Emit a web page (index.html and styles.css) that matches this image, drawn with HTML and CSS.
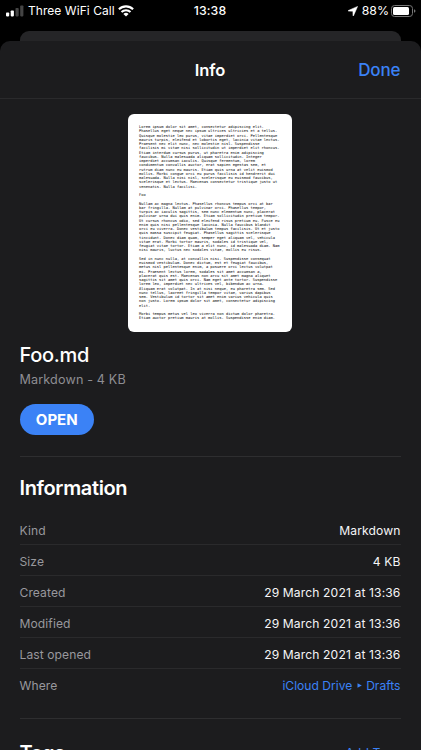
FILE: index.html
```html
<!DOCTYPE html>
<html lang="en">
<head>
<meta charset="utf-8">
<title>Info</title>
<link rel="stylesheet" href="styles.css">
</head>
<body>
<div class="status">
  <div class="status-left">
    <svg class="signal" width="18" height="12" viewBox="0 0 18 12"><rect x="0" y="7.4" width="3.2" height="4" rx=".8" fill="#fff"/><rect x="4.7" y="5.4" width="3.2" height="6" rx=".8" fill="#fff"/><rect x="9.5" y="3" width="3.2" height="8.4" rx=".8" fill="#444"/><rect x="14.2" y=".4" width="3.2" height="11" rx=".8" fill="#444"/></svg>
    <span class="carrier">Three WiFi Call</span>
    <svg class="wifi" width="16" height="12" viewBox="0 0 16 12" fill="none" stroke="#fff" stroke-width="2.1"><path d="M.9 4.3a10.2 10.2 0 0 1 14.200 0M3.500 7a6.500 6.500 0 0 1 9 0"/><path d="M8 11.600L5.400 9a3.700 3.700 0 0 1 5.200 0z" fill="#fff" stroke="none"/></svg>
  </div>
  <time class="clock">13:38</time>
  <div class="status-right">
    <svg class="location" width="10" height="10" viewBox="0 0 10 10"><path d="M9.600.4L.3 4.500q-.5.500.1.600l4.500.1.100 4.500q.1.600.500.100z" fill="#fff" stroke="#fff" stroke-width=".5"/></svg>
    <span class="percent">88%</span>
    <svg class="battery" width="25" height="12" viewBox="0 0 25 12"><rect x=".5" y=".5" width="21" height="11" rx="3" fill="none" stroke="#777"/><rect x="2" y="2" width="16" height="8" rx="1.500" fill="#fff"/><path d="M23 4.200q1.500.6 1.500 1.800T23 7.800z" fill="#777"/></svg>
  </div>
</div>
<div class="back-card"></div>
<main class="sheet">
  <header class="bar">
    <h1 class="title">Info</h1>
    <a class="done">Done</a>
  </header>
  <div class="body">
    <pre class="page">Lorem ipsum dolor sit amet, consectetur adipiscing elit.
Phasellus eget neque nec ipsum ultrices ultricies et a tellus.
Quisque molestie leo purus, vitae imperdiet orci. Pellentesque
mauris turpis, eleifend et lobortis eget, lacinia vitae lectus.
Praesent nec elit nunc, nec molestie nisl. Suspendisse
facilisis mi vitae nisi sollicitudin ut imperdiet elit rhoncus.
Etiam interdum cursus purus, ut pharetra enim adipiscing
faucibus. Nulla malesuada aliquam sollicitudin. Integer
imperdiet accumsan iaculis. Quisque fermentum, lorem
condimentum convallis auctor, erat sapien egestas sem, et
rutrum diam nunc eu mauris. Etiam quis urna at velit euismod
mollis. Morbi congue orci eu purus facilisis id hendrerit dui
malesuada. Nulla nisi nisl, scelerisque eu euismod faucibus,
scelerisque et lectus. Maecenas consectetur tristique justo ut
venenatis. Nulla facilisi.

Foo

Nullam ac magna lectus. Phasellus rhoncus tempus orci at bar
bar fringilla. Nullam at pulvinar orci. Phasellus tempor,
turpis ac iaculis sagittis, sem nunc elementum nunc, placerat
pulvinar urna dui quis enim. Etiam sollicitudin pretium tempor.
Ut cursus rhoncus odio, sed eleifend risus pretium eu. Fusce eu
enim quis nisi pellentesque lacinia. Nulla faucibus blandit
orci eu viverra. Donec vestibulum tempus facilisis. Ut et justo
quis massa suscipit feugiat. Phasellus sagittis scelerisque
tincidunt. Donec diam quam, semper eget aliquam vel, vehicula
vitae erat. Morbi tortor mauris, sodales id tristique vel,
feugiat vitae tortor. Etiam a elit nunc, id malesuada diam. Nam
nisi mauris, luctus nec sodales vitae, mollis eu risus.

Sed in nunc nulla, at convallis nisi. Suspendisse consequat
euismod vestibulum. Donec dictum, est et feugiat faucibus,
metus nisl pellentesque enim, a posuere orci lectus volutpat
mi. Praesent lectus lorem, sodales sit amet accumsan a,
placerat quis est. Maecenas non arcu sit amet magna aliquet
sagittis sit amet quis orci. Nam eget ante tortor. Suspendisse
lorem leo, imperdiet nec ultrices vel, bibendum ac urna.
Aliquam erat volutpat. In at nisi neque, eu pharetra sem. Sed
nunc tellus, laoreet fringilla tempor vitae, varius dapibus
sem. Vestibulum id tortor sit amet enim varius vehicula quis
non justo. Lorem ipsum dolor sit amet, consectetur adipiscing
elit.

Morbi tempus metus vel leo viverra non dictum dolor pharetra.
Etiam auctor pretium mauris at mollis. Suspendisse enim diam.</pre>
    <h2 class="name">Foo.md</h2>
    <p class="meta">Markdown - 4 KB</p>
    <button class="open">OPEN</button>
    <section class="info">
      <h2 class="heading">Information</h2>
      <dl class="rows">
        <div class="row"><dt>Kind</dt><dd>Markdown</dd></div>
        <div class="row"><dt>Size</dt><dd>4 KB</dd></div>
        <div class="row"><dt>Created</dt><dd>29 March 2021 at 13:36</dd></div>
        <div class="row"><dt>Modified</dt><dd>29 March 2021 at 13:36</dd></div>
        <div class="row"><dt>Last opened</dt><dd>29 March 2021 at 13:36</dd></div>
        <div class="row"><dt>Where</dt><dd class="link">iCloud Drive <svg width="5" height="5" viewBox="0 0 5 5"><path d="M.5.300L4.800 2.500.5 4.700z" fill="#3b82f6"/></svg> Drafts</dd></div>
      </dl>
    </section>
    <section class="tags">
      <h2 class="heading">Tags</h2>
      <a class="add">Add Tags</a>
    </section>
  </div>
</main>
</body>
</html>
```
FILE: styles.css
```css
* { box-sizing: border-box; margin: 0; padding: 0; }
body {
  width: 421px;
  height: 750px;
  overflow: hidden;
  background: #000;
  color: #fff;
  font-family: Inter, "Liberation Sans", sans-serif;
  display: flex;
  flex-direction: column;
}
.status {
  height: 31px;
  flex: none;
  display: grid;
  grid-template-columns: 1fr auto 1fr;
  font-size: 12.5px;
  line-height: 21px;
  padding: 0 5px 0 6px;
}
.status-left, .status-right { display: flex; height: 21px; align-items: center; }
.status-right { justify-content: flex-end; }
.carrier { margin-left: 4px; font-size: 12px; letter-spacing: 0.05px; white-space: nowrap; }
.wifi { margin-left: 3px; }
.clock { font-weight: 500; font-size: 12.3px; letter-spacing: 0.1px; margin-left: -2px; }
.percent { margin: 0 2px 0 4px; font-size: 12.3px; }
.back-card {
  flex: none;
  height: 10px;
  margin: 0 20px;
  border-radius: 9px 9px 0 0;
  background: #252527;
}
.sheet {
  flex: none;
  height: 709px;
  overflow: hidden;
  border-radius: 10px 10px 0 0;
  background: #1c1c1e;
}
.bar {
  height: 58px;
  display: grid;
  grid-template-columns: 1fr auto 1fr;
  align-items: center;
  padding: 0 20.5px 0 19.5px;
  border-bottom: 1px solid #2a2a2c;
}
.title { grid-column: 2; font-size: 16.5px; font-weight: 600; }
.done { justify-self: end; font-size: 17px; font-weight: 500; color: #3b82f6; letter-spacing: -0.1px; }
.body { padding: 15px 20.5px 0 19.5px; display: flex; flex-direction: column; }
.page {
  align-self: center;
  width: 164px;
  height: 218px;
  padding: 11px 0 0 11px;
  border-radius: 6px;
  background: #fff;
  color: #000;
  font-family: "DejaVu Sans Mono", monospace;
  font-size: 3.71px;
  line-height: 4.245px;
  overflow: hidden;
}
.name { margin-top: 11px; font-size: 20px; line-height: 24px; font-weight: 500; letter-spacing: -0.3px; }
.meta { margin-top: 4px; font-size: 12.6px; line-height: 18px; color: #8e8e93; letter-spacing: 0.15px; }
.open {
  margin-top: 14.5px;
  width: 74.5px;
  height: 31.5px;
  border: 0;
  border-radius: 16px;
  background: #3b82f6;
  color: #fff;
  font: 700 15px/31px Inter, "Liberation Sans", sans-serif;
}
.info { margin-top: 21px; border-top: 1px solid #2e2e30; padding-top: 18px; }
.heading { font-size: 20px; line-height: 26px; font-weight: 600; letter-spacing: -0.35px; }
.rows { margin-top: 13px; }
.row {
  height: 31px;
  display: flex;
  justify-content: space-between;
  align-items: center;
  padding-top: 2px;
  border-bottom: 1px solid #2a2a2c;
  font-size: 12.1px;
  letter-spacing: 0.13px;
}
.row:last-child { border-bottom-color: transparent; }
dt { color: #98989d; letter-spacing: 0.08px; }
dd { color: #f5f5f7; }
dd.link { color: #3b82f6; letter-spacing: 0; }
dd svg { vertical-align: 2px; margin: 0 1px; }
.tags {
  margin-top: 18px;
  border-top: 1px solid #2e2e30;
  padding-top: 21px;
  display: flex;
  justify-content: space-between;
}
.add { color: #3b82f6; font-size: 12.1px; line-height: 26px; letter-spacing: 0.13px; }
```
